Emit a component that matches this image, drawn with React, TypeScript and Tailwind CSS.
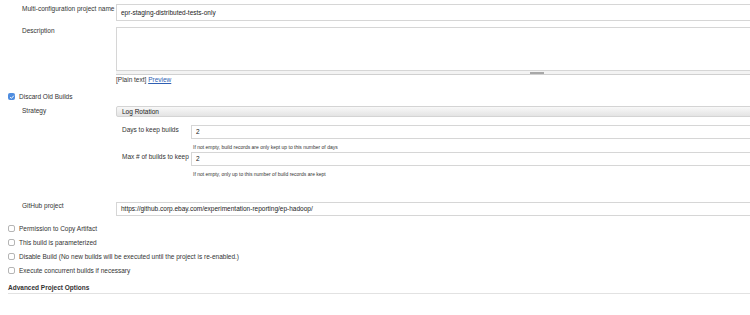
import React from 'react';

function Box({ checked }: { checked?: boolean }) {
  if (checked) {
    return (
      <span className="flex h-[7px] w-[7px] shrink-0 items-center justify-center rounded-[2px] bg-[#4f8de0]">
        <svg viewBox="0 0 8 8" className="h-[6px] w-[6px]">
          <path d="M1.5 4.2 L3.2 5.8 L6.5 2.2" fill="none" stroke="#fff" strokeWidth="1.3" />
        </svg>
      </span>
    );
  }
  return <span className="h-[7px] w-[7px] shrink-0 rounded-[2px] border border-[#b5b5b5] bg-white" />;
}

function CheckRow({ label, checked, className = '' }: { label: string; checked?: boolean; className?: string }) {
  return (
    <div className={`flex h-[9px] items-center gap-[4px] whitespace-nowrap pl-[8px] ${className}`}>
      <Box checked={checked} />
      <span>{label}</span>
    </div>
  );
}

function TextField({ value, className = '' }: { value: string; className?: string }) {
  return (
    <div className={`flex w-[660px] shrink-0 items-center whitespace-nowrap border border-[#d6d6d6] bg-white pl-[4px] text-[6.5px] text-[#222] ${className}`}>
      {value}
    </div>
  );
}

function Label({ children, className = '' }: { children: React.ReactNode; className?: string }) {
  return <div className={`shrink-0 whitespace-nowrap ${className}`}>{children}</div>;
}

export default function App() {
  return (
    <div className="relative h-[315px] w-[750px] overflow-hidden bg-white font-['Liberation_Sans',Arial,sans-serif] text-[6.5px] leading-[8px] text-[#333]">
      <div className="flex flex-col pt-[4px]">
        {/* project name */}
        <div className="flex">
          <Label className="w-[116px] pl-[22px] pt-[1px]">Multi-configuration project name</Label>
          <TextField value="epr-staging-distributed-tests-only" className="h-[17px]" />
        </div>

        {/* description */}
        <div className="mt-[6px] flex">
          <Label className="w-[116px] pl-[22px]">Description</Label>
          <div className="flex shrink-0 flex-col">
            <div className="h-[44px] w-[660px] border border-[#d6d6d6] bg-white" />
            <div className="relative h-[4px] w-[660px] border-b border-[#d0d0d0] bg-[#f3f3f3]">
              <div className="absolute left-[414px] top-[1px] h-[2px] w-[14px] bg-[#a8a8a8]" />
            </div>
            <div className="mt-[1px]">
              [Plain text] <span className="text-[#2f5fb3] underline">Preview</span>
            </div>
          </div>
        </div>

        {/* discard old builds */}
        <CheckRow label="Discard Old Builds" checked className="mt-[8px]" />

        <div className="mt-[5px] flex">
          <Label className="w-[116px] pl-[22px] pt-[1px]">Strategy</Label>
          <div className="flex shrink-0 flex-col">
            <div className="flex h-[11px] w-[660px] items-center rounded-l-[2px] border border-[#d4d4d4] bg-gradient-to-b from-[#f8f8f8] to-[#e4e4e4] pl-[5px] font-medium text-[#222]">
              Log Rotation
            </div>

            <div className="mt-[8px] flex">
              <Label className="w-[75px] pl-[6px] pt-[1px]">Days to keep builds</Label>
              <div className="flex shrink-0 flex-col">
                <TextField value="2" className="h-[14px]" />
                <div className="mt-[5px] whitespace-nowrap pl-[2px] text-[5px] leading-[6px]">If not empty, build records are only kept up to this number of days</div>
              </div>
            </div>

            <div className="mt-[2px] flex">
              <Label className="w-[75px] pl-[6px] pt-[1px]">Max # of builds to keep</Label>
              <div className="flex shrink-0 flex-col">
                <TextField value="2" className="h-[14px]" />
                <div className="mt-[5px] whitespace-nowrap pl-[2px] text-[5px] leading-[6px]">If not empty, only up to this number of build records are kept</div>
              </div>
            </div>
          </div>
        </div>

        {/* github */}
        <div className="mt-[25px] flex">
          <Label className="w-[116px] pl-[22px]">GitHub project</Label>
          <TextField value="https://github.corp.ebay.com/experimentation-reporting/ep-hadoop/" className="h-[14px]" />
        </div>

        <CheckRow label="Permission to Copy Artifact" className="mt-[8px]" />
        <CheckRow label="This build is parameterized" className="mt-[5px]" />
        <CheckRow label="Disable Build (No new builds will be executed until the project is re-enabled.)" className="mt-[5px]" />
        <CheckRow label="Execute concurrent builds if necessary" className="mt-[5px]" />

        <div className="ml-[8px] mt-[9px] border-b border-[#e2e2e2] pb-[1px] font-bold text-[#333]">Advanced Project Options</div>
      </div>
    </div>
  );
}
